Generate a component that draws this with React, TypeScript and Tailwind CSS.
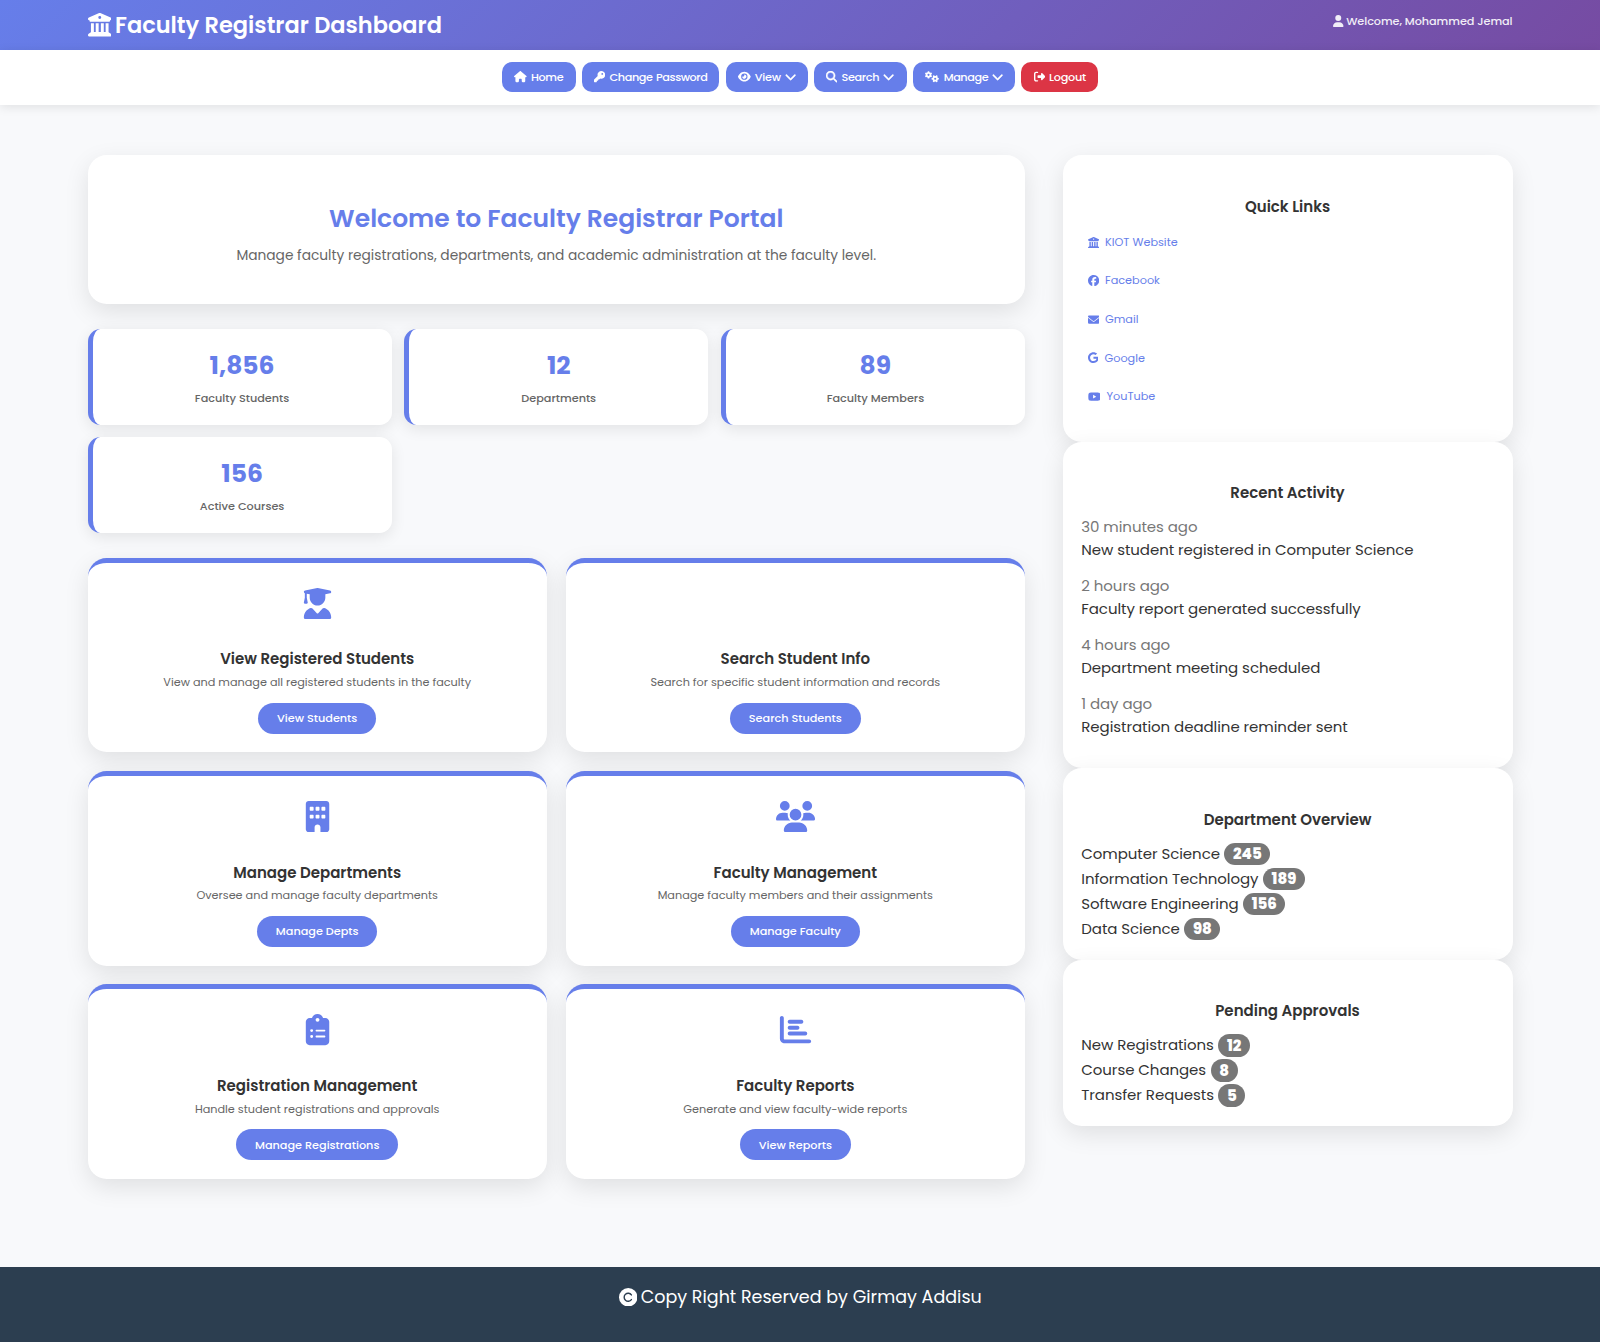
import type { ReactNode } from 'react';
import {
  FaBuilding,
  FaBuildingColumns,
  FaChartBar,
  FaChevronDown,
  FaClipboardList,
  FaEnvelope,
  FaEye,
  FaFacebook,
  FaGears,
  FaGoogle,
  FaHouse,
  FaKey,
  FaMagnifyingGlass,
  FaRightFromBracket,
  FaUser,
  FaUserGraduate,
  FaUsers,
  FaYoutube,
} from 'react-icons/fa6';

const navItems = [
  { label: 'Home', Icon: FaHouse, size: 'w-[1.125em]', box: 'w-[73.75px] bg-[#667eea]', text: 'tracking-[-0.032em]', menu: false },
  { label: 'Change Password', Icon: FaKey, size: 'w-[1em]', box: 'w-[137.5px] bg-[#667eea]', text: 'tracking-[-0.037em] [word-spacing:1px]', menu: false },
  { label: 'View', Icon: FaEye, size: 'w-[1.125em]', box: 'w-[82px] bg-[#667eea]', text: 'tracking-[-0.024em]', menu: true },
  { label: 'Search', Icon: FaMagnifyingGlass, size: 'w-[1em] [stroke-width:20px]', box: 'w-[93px] bg-[#667eea]', text: 'tracking-[-0.032em]', menu: true },
  { label: 'Manage', Icon: FaGears, size: 'w-[1.25em]', box: 'w-[102px] bg-[#667eea]', text: 'tracking-[-0.036em]', menu: true },
  { label: 'Logout', Icon: FaRightFromBracket, size: 'w-[1em]', box: 'w-[76.75px] bg-[#dc3545]', text: 'tracking-[-0.025em]', menu: false },
];

const stats = [
  { value: '1,856', label: 'Faculty Students' },
  { value: '12', label: 'Departments' },
  { value: '89', label: 'Faculty Members' },
  { value: '156', label: 'Active Courses' },
];

const features = [
  { title: 'View Registered Students', text: 'View and manage all registered students in the faculty', action: 'View Students', Icon: FaUserGraduate },
  { title: 'Search Student Info', text: 'Search for specific student information and records', action: 'Search Students', Icon: null },
  { title: 'Manage Departments', text: 'Oversee and manage faculty departments', action: 'Manage Depts', Icon: FaBuilding },
  { title: 'Faculty Management', text: 'Manage faculty members and their assignments', action: 'Manage Faculty', Icon: FaUsers },
  { title: 'Registration Management', text: 'Handle student registrations and approvals', action: 'Manage Registrations', Icon: FaClipboardList },
  { title: 'Faculty Reports', text: 'Generate and view faculty-wide reports', action: 'View Reports', Icon: FaChartBar },
];

const links = [
  { label: 'KIOT Website', Icon: FaBuildingColumns, size: 'w-[1em]' },
  { label: 'Facebook', Icon: FaFacebook, size: 'w-[1em]' },
  { label: 'Gmail', Icon: FaEnvelope, size: 'w-[1em]' },
  { label: 'Google', Icon: FaGoogle, size: 'w-[0.953em]' },
  { label: 'YouTube', Icon: FaYoutube, size: 'w-[1.125em]' },
];

const activity = [
  ['30 minutes ago', 'New student registered in Computer Science'],
  ['2 hours ago', 'Faculty report generated successfully'],
  ['4 hours ago', 'Department meeting scheduled'],
  ['1 day ago', 'Registration deadline reminder sent'],
];

const departments = [
  ['Computer Science', '245'],
  ['Information Technology', '189'],
  ['Software Engineering', '156'],
  ['Data Science', '98'],
];

const approvals = [
  ['New Registrations', '12'],
  ['Course Changes', '8'],
  ['Transfer Requests', '5'],
];

function Panel({ title, height, children }: { title: string; height: string; children: ReactNode }) {
  return (
    <section className={`${height} rounded-[18.75px] bg-white px-[18.75px] pt-[39.6px] shadow-[0_8px_25px_rgba(0,0,0,0.1)]`}>
      <h3 className="text-center text-[15px] leading-6 font-semibold">{title}</h3>
      {children}
    </section>
  );
}

function CountList({ rows }: { rows: string[][] }) {
  return (
    <ul className="mt-[9.7px]">
      {rows.map(([name, count]) => (
        <li key={name} className="flex h-[25px] items-center gap-[4.5px] text-[15px] tracking-[-0.004em]">
          {name}
          <span className="flex h-[22.5px] items-center rounded-full bg-[#777777] px-[8.6px] pt-px font-extrabold tracking-normal text-white">
            {count}
          </span>
        </li>
      ))}
    </ul>
  );
}

function CopyrightMark() {
  return (
    <svg viewBox="0 0 18.5 18.5" className="size-[18.5px] shrink-0">
      <circle cx="9.25" cy="9.25" r="9.25" fill="currentColor" />
      <path d="M12.4 6.9A4 4 0 1 0 12.4 11.6" fill="none" stroke="#2c3e50" strokeWidth="1.4" strokeLinecap="round" />
    </svg>
  );
}

export default function App() {
  return (
    <div className="flex min-h-[1342px] flex-col bg-[#f8f9fb] font-[Poppins,Inter,sans-serif] text-[#333333]">
      <header className="h-[50px] bg-[linear-gradient(135deg,#667eea_0%,#764ba2_100%)] px-[87.5px] text-white">
        <div className="flex items-start justify-between">
          <h1 className="flex h-[51px] items-center gap-[4px] text-[22.5px] font-semibold">
            <FaBuildingColumns className="mb-[1.5px] size-[23.5px] shrink-0" />
            Faculty Registrar Dashboard
          </h1>
          <div className="mt-3 flex h-[18px] items-center gap-[2.5px] text-[11.25px] font-medium tracking-[-0.005em] opacity-90">
            <FaUser className="h-[12px] w-[10.5px] shrink-0" />
            Welcome, Mohammed Jemal
          </div>
        </div>
      </header>

      <nav className="flex h-[55px] items-start justify-center gap-[6.25px] bg-white pt-3 shadow-[0_2px_10px_rgba(0,0,0,0.1)]">
        {navItems.map(({ label, Icon, size, box, text, menu }) => (
          <a key={label} className={`${box} flex h-[30px] items-center rounded-[10px] pl-[12.25px] text-[11.25px] font-medium text-white`}>
            <Icon className={`${size} mr-[4.2px] h-[1em] shrink-0`} />
            <span className={text}>{label}</span>
            {menu && <FaChevronDown className="ml-[4.2px] size-[1em] shrink-0 [stroke-width:20px]" />}
          </a>
        ))}
      </nav>

      <main className="flex flex-1 items-start gap-[37.5px] px-[87.5px] pt-[50px]">
        <div className="w-[937.5px]">
          <section className="flex h-[148.9px] flex-col items-center rounded-[18.75px] bg-white pt-[44px] shadow-[0_8px_25px_rgba(0,0,0,0.1)]">
            <h2 className="text-[25px] leading-10 font-semibold text-[#667eea]">Welcome to Faculty Registrar Portal</h2>
            <p className="mt-[5px] text-[13.75px] leading-6 text-[#666666]">
              Manage faculty registrations, departments, and academic administration at the faculty level.
            </p>
          </section>

          <section className="mt-[25px] grid grid-cols-3 gap-[12.5px]">
            {stats.map(({ value, label }) => (
              <div key={label} className="flex h-[95.75px] flex-col items-center rounded-[12.5px] border-l-[5px] border-[#667eea] bg-white pt-[19px] shadow-[0_4px_15px_rgba(0,0,0,0.09)]">
                <div className="text-[25px] leading-9 font-bold text-[#667eea]">{value}</div>
                <div className="mt-[5px] text-[11.25px] leading-[18px] font-medium text-[#666666]">{label}</div>
              </div>
            ))}
          </section>

          <section className="mt-[25px] grid grid-cols-2 gap-[18.75px]">
            {features.map(({ title, text, action, Icon }) => (
              <article key={title} className="flex h-[194.5px] flex-col items-center rounded-[18.75px] border-t-[5px] border-[#667eea] bg-white pt-[25px] shadow-[0_8px_25px_rgba(0,0,0,0.1)]">
                <div className="h-[31.25px] text-[#667eea]">{Icon && <Icon className="h-[31.25px] w-[39.06px]" />}</div>
                <h3 className="mt-[28.15px] text-[15px] leading-6 font-semibold">{title}</h3>
                <p className="mt-[1.75px] text-[11.25px] leading-[18px] text-[#666666]">{text}</p>
                <button className="mt-[11.85px] h-[31px] rounded-full bg-[#667eea] px-[18.75px] pt-[0.3px] text-[11.25px] font-medium text-white">{action}</button>
              </article>
            ))}
          </section>
        </div>

        <aside className="w-[450px]">
          <Panel title="Quick Links" height="h-[286.8px]">
            <ul className="mt-[4.3px] pl-[6.25px]">
              {links.map(({ label, Icon, size }) => (
                <li key={label} className="flex h-[38.6px] items-center gap-[6.25px] text-[11.25px] text-[#667eea]">
                  <Icon className={`${size} h-[1em] shrink-0`} />
                  {label}
                </li>
              ))}
            </ul>
          </Panel>
          <Panel title="Recent Activity" height="h-[326.2px]">
            <ul className="mt-[9.4px] flex flex-col gap-[13px] text-[15px] tracking-[-0.004em]">
              {activity.map(([time, text]) => (
                <li key={time} className="leading-[23px]">
                  <div className="text-[#777777]">{time}</div>
                  <div>{text}</div>
                </li>
              ))}
            </ul>
          </Panel>
          <Panel title="Department Overview" height="h-[191.7px]">
            <CountList rows={departments} />
          </Panel>
          <Panel title="Pending Approvals" height="h-[166.5px]">
            <CountList rows={approvals} />
          </Panel>
        </aside>
      </main>

      <footer className="flex h-[75px] items-start justify-center bg-[#2c3e50] pt-[17px] text-white">
        <div className="flex h-[26px] items-center gap-[3.5px] pl-[0.5px] text-[17.5px] tracking-[0.001em]">
          <CopyrightMark />
          Copy Right Reserved by Girmay Addisu
        </div>
      </footer>
    </div>
  );
}
